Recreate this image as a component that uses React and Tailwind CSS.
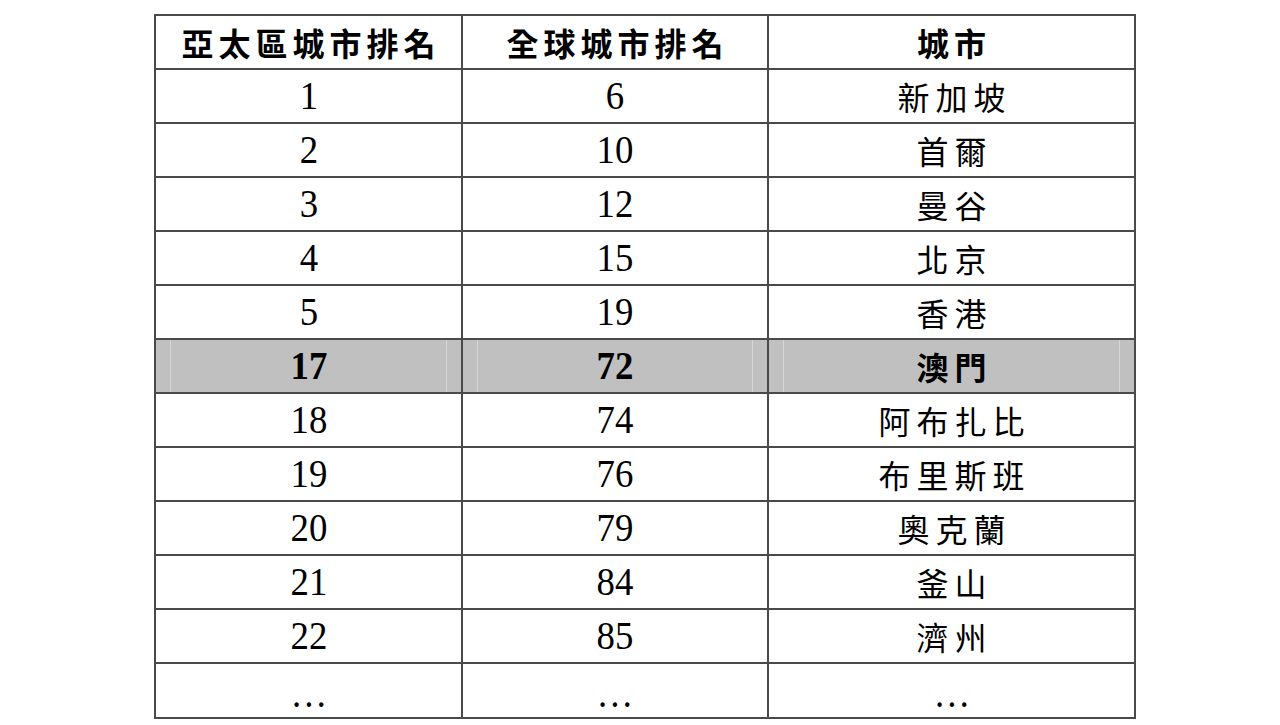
const ROWS = [
  ["1", "6", "新加坡"],
  ["2", "10", "首爾"],
  ["3", "12", "曼谷"],
  ["4", "15", "北京"],
  ["5", "19", "香港"],
  ["17", "72", "澳門", true],
  ["18", "74", "阿布扎比"],
  ["19", "76", "布里斯班"],
  ["20", "79", "奧克蘭"],
  ["21", "84", "釜山"],
  ["22", "85", "濟州"],
  ["…", "…", "…"],
];

const serif = "font-['Liberation_Serif','Noto_Sans_CJK_TC',serif]";
const cjk = "font-['Noto_Sans_CJK_TC','Noto_Sans_CJK_SC',sans-serif]";

function Cell({ children, highlight, tall }) {
  return (
    <td
      className={`${tall ? "h-[55px]" : "h-[54px]"} border-2 border-[#4a4a4a] p-0 text-center align-middle`}
    >
      <div
        className={`mx-[14px] flex h-full items-center justify-center ${
          highlight ? "border-x border-[#d4d4d4]" : ""
        }`}
      >
        {children}
      </div>
    </td>
  );
}

function Num({ value, bold }) {
  return (
    <span
      className={`inline-block scale-x-[0.92] text-[40px] leading-none text-black ${serif} ${
        bold ? "font-bold" : ""
      }`}
    >
      {value}
    </span>
  );
}

export default function App() {
  return (
    <div className="h-[725px] w-[1280px] bg-white pt-[14px] pl-[154px]">
      <table className="w-[980px] table-fixed border-collapse border-2 border-[#4a4a4a]">
        <colgroup>
          <col className="w-[307px]" />
          <col className="w-[306px]" />
          <col className="w-[367px]" />
        </colgroup>
        <thead>
          <tr>
            {["亞太區城市排名", "全球城市排名", "城市"].map((h) => (
              <Cell key={h}>
                <span className={`pl-[5px] text-[32px] font-bold leading-none tracking-[5px] text-black ${cjk}`}>
                  {h}
                </span>
              </Cell>
            ))}
          </tr>
        </thead>
        <tbody>
          {ROWS.map(([a, g, city, hl]) => {
            const last = city === "…";
            return (
              <tr key={a + g} className={hl ? "bg-[#c0c0c0]" : "bg-white"}>
                <Cell highlight={hl} tall={last}>
                  <span className={last ? "pt-[6px]" : ""}>
                    <Num value={a} bold={hl} />
                  </span>
                </Cell>
                <Cell highlight={hl} tall={last}>
                  <span className={last ? "pt-[6px]" : ""}>
                    <Num value={g} bold={hl} />
                  </span>
                </Cell>
                <Cell highlight={hl} tall={last}>
                  {last ? (
                    <span className="pt-[6px]">
                      <Num value={city} />
                    </span>
                  ) : (
                    <span
                      className={`pl-[6px] text-[32px] leading-none tracking-[6px] text-black ${cjk} ${
                        hl ? "font-bold" : ""
                      }`}
                    >
                      {city}
                    </span>
                  )}
                </Cell>
              </tr>
            );
          })}
        </tbody>
      </table>
    </div>
  );
}
